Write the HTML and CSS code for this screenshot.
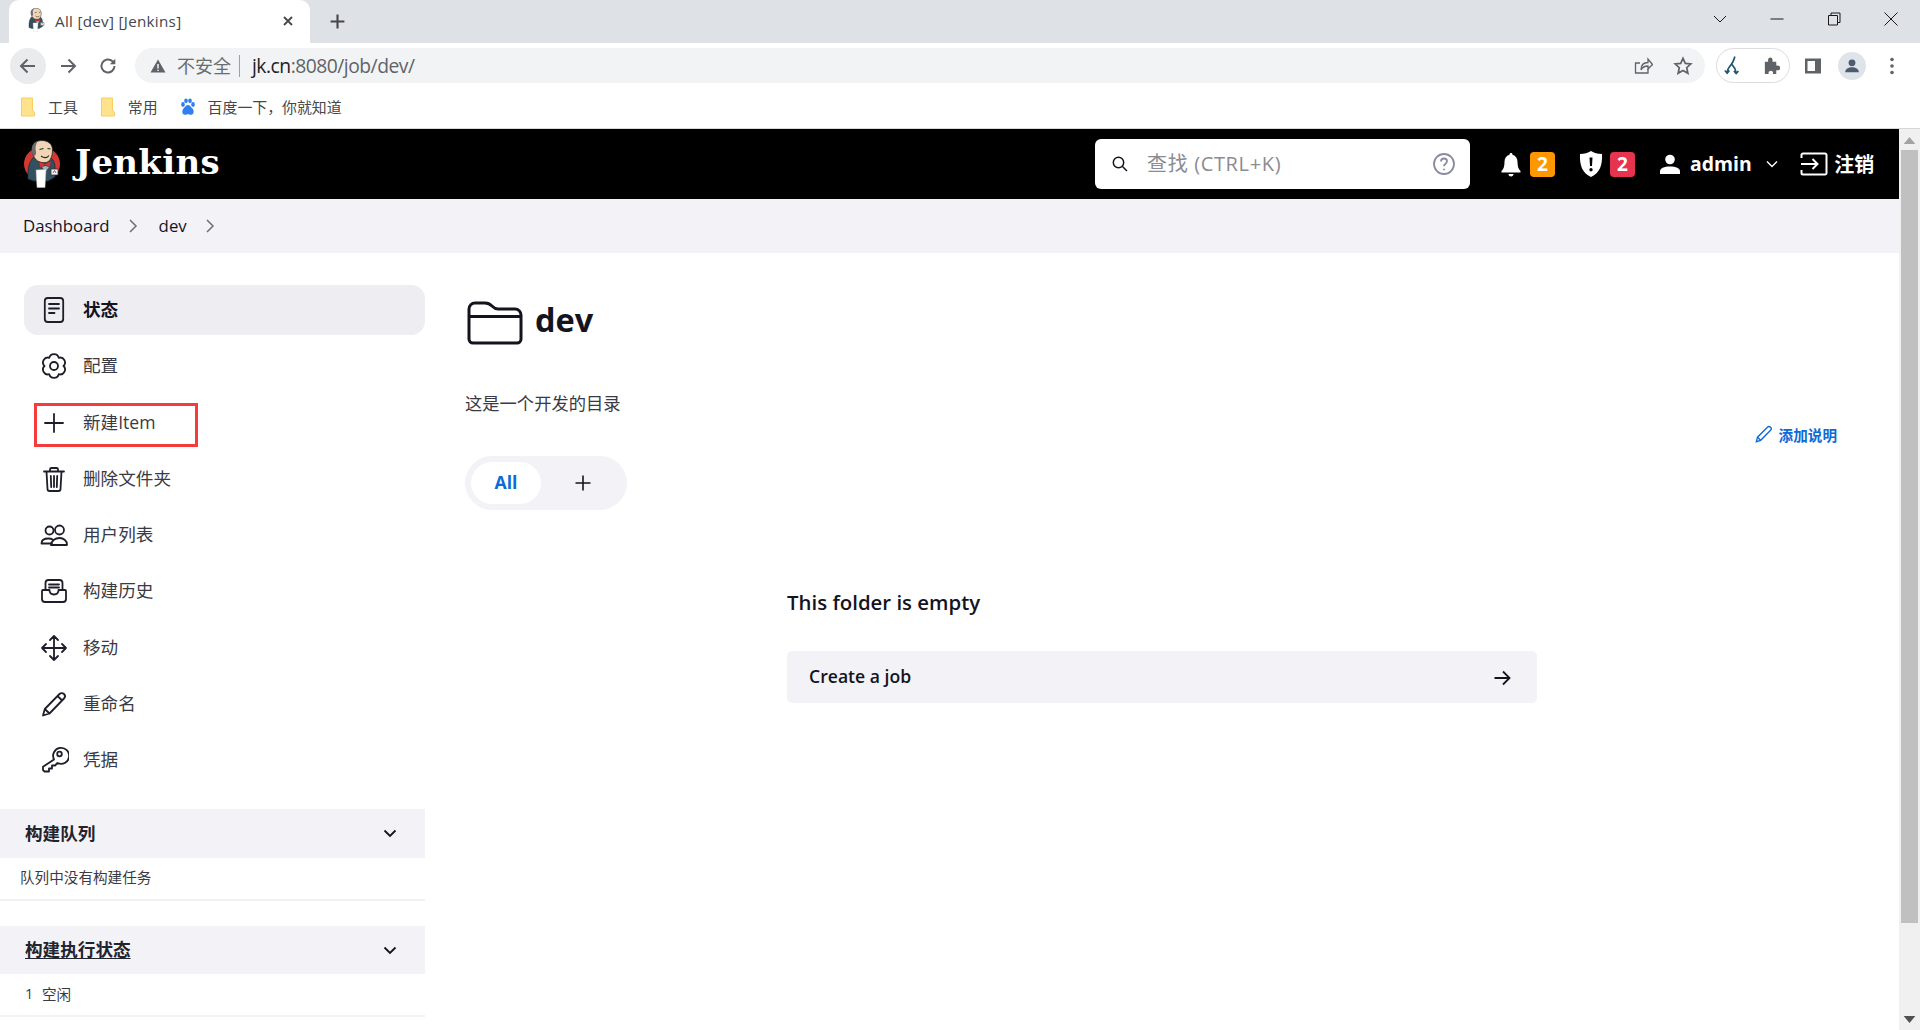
FILE: index.html
```html
<!DOCTYPE html>
<html lang="zh-CN">
<head>
<meta charset="utf-8">
<title>All [dev] [Jenkins]</title>
<link rel="stylesheet" href="styles.css">
</head>
<body>
<svg class="sprite" aria-hidden="true">
  <symbol id="butler" viewBox="0 0 36 48">
    <path d="M4 33c0-9 4-16 9-18l9 1c6 1 9 5 9 12v9l-7 4H10l-6-2z" fill="#335061" stroke="#1c2b35" stroke-width=".8"/>
    <path d="M8 9C8 3 13 .5 18 .5c6 0 10.500 3.500 10.500 9.500 0 5-1 8.500-4 11.500-2 1.500-6 1.500-9 .5-4-1.500-7-6-7.500-12.500z" fill="#f0d6b7" stroke="#2b2b2b" stroke-width=".9"/>
    <path d="M8.500 14C6.500 8 9 2.500 14 1 11.500 4 11 8 12 12c.5 3-2 6-3.500 2z" fill="#6d6b6d"/>
    <path d="M15.500 9.500l4-1M23.500 8.500l3 .5M17 16c3 2.500 6.500 2 8-.5" fill="none" stroke="#2b2b2b" stroke-width="1.100"/>
    <path d="M15 21.500l6 2.500 6-3-1 6-5-2-5 3z" fill="#d33833" stroke="#7a1f1c" stroke-width=".4"/>
    <path d="M18 27l3.500-1 3.500 1-3.500 4.500z" fill="#a8b4ba"/>
    <path d="M12 30l10-.5-1 18h-8z" fill="#fff" stroke="#bbb" stroke-width=".5"/>
    <path d="M27 29l7 0v6h-7z" fill="#f4f4f4" stroke="#333" stroke-width=".8"/>
    <path d="M29 33l1.500-2.500 1.500 2.500" fill="none" stroke="#333" stroke-width=".7"/>
  </symbol>
</svg>

<header class="tabstrip">
  <div class="tab">
    <svg class="favicon"><use href="#butler"/></svg>
    <span class="tab-title">All [dev] [Jenkins]</span>
    <svg class="tab-close" viewBox="0 0 12 12"><path d="M2 2l8 8M10 2l-8 8"/></svg>
  </div>
  <svg class="tab-new" viewBox="0 0 16 16"><path d="M8 1.500v13M1.500 8h13"/></svg>
  <div class="window-controls">
    <svg viewBox="0 0 16 16"><path d="M2 5l6 6 6-6"/></svg>
    <svg viewBox="0 0 16 16"><path d="M1.500 8h13"/></svg>
    <svg viewBox="0 0 16 16"><path d="M2.500 4.500h9v9.500h-9zM5 4.500V2h9v9.500h-2.500"/></svg>
    <svg viewBox="0 0 16 16"><path d="M1.500 1.500l13 13M14.500 1.500l-13 13"/></svg>
  </div>
</header>

<nav class="toolbar">
  <span class="tool tool-back"><svg viewBox="0 0 20 20"><path d="M17 10H3.500M9.500 3.500L3 10l6.500 6.500"/></svg></span>
  <span class="tool"><svg viewBox="0 0 20 20"><path d="M3 10h13.500M10.500 3.500L17 10l-6.500 6.500"/></svg></span>
  <span class="tool"><svg viewBox="0 0 20 20"><path d="M16.500 10a6.500 6.500 0 1 1-2-4.700L16.500 7.500"/><path class="solid" d="M17.300 2.800v5.500h-5.500z"/></svg></span>
  <div class="omnibox">
    <svg class="warn" viewBox="0 0 16 16"><path d="M8 1.500L15.500 14.500H.5z"/><path class="warn-mark" d="M8 6v4.500M8 11.800v1.200"/></svg>
    <span class="insecure">不安全</span>
    <span class="omni-sep"></span>
    <span class="url"><b>jk.cn</b>:8080/job/dev/</span>
    <svg class="omni-icon" viewBox="0 0 20 20"><path d="M15 13v4H2.500V7H7"/><path d="M8 14c0-5 3-7.500 7-7.500V3l4.500 5.500L15 13V10c-3 0-5.500 1-7 4z"/></svg>
    <svg class="omni-icon star" viewBox="0 0 20 20"><path d="M10 2.300l2.300 5.100 5.500.6-4.100 3.700 1.200 5.500L10 14.400l-4.900 2.800 1.200-5.500L2.200 8l5.500-.6z"/></svg>
  </div>
  <div class="ext-pill">
    <svg class="ext-fork" viewBox="0 0 20 22"><path d="M12 1C11 7 8 10 5 14c-1 2-1.500 3-1.500 5M9 10c2 2 3.500 4 4.500 9M1 16.500l2.500 3 2.500-3M11 17l2.500 3 2.500-3"/></svg>
    <svg class="ext-puzzle" viewBox="0 0 20 20"><path d="M3 6h3.500C6 3 7 1.500 8.800 1.500S11.500 3 11 6h4v4c3-.5 4 .7 4 2.500S18 15.500 15 15v4h-3.500c.5-2.500-.7-3.500-2.200-3.500S6.500 16.500 7 19H3z"/></svg>
  </div>
  <svg class="side-panel" viewBox="0 0 18 18"><path d="M1 1.500h16v15H1zM3.500 4v10H11V4z" fill-rule="evenodd"/></svg>
  <span class="avatar"><svg viewBox="0 0 20 20"><circle cx="10" cy="6.500" r="3.800"/><path d="M2.500 17c0-3.800 3.500-5.500 7.500-5.500s7.500 1.700 7.500 5.500z"/></svg></span>
  <svg class="kebab" viewBox="0 0 6 20"><circle cx="3" cy="3.500" r="1.800"/><circle cx="3" cy="10" r="1.800"/><circle cx="3" cy="16.500" r="1.800"/></svg>
</nav>

<div class="bookmarks">
  <span class="bookmark"><svg class="bm-folder" viewBox="0 0 15 20"><path d="M1.500 1h11v12l2 2.500v3.500h-13z"/></svg>工具</span>
  <span class="bookmark"><svg class="bm-folder" viewBox="0 0 15 20"><path d="M1.500 1h11v12l2 2.500v3.500h-13z"/></svg>常用</span>
  <span class="bookmark"><svg class="bm-baidu" viewBox="0 0 16 18"><ellipse cx="3" cy="6.500" rx="1.800" ry="2.400"/><ellipse cx="6" cy="2.800" rx="1.800" ry="2.400"/><ellipse cx="10" cy="2.800" rx="1.800" ry="2.400"/><ellipse cx="13" cy="6.500" rx="1.800" ry="2.400"/><path d="M8 7c-2 0-3 2-4.500 3.500S1.500 16.800 5 16.800c1.500 0 2-.5 3-.5s1.500.5 3 .5c3.500 0 3-5 1.500-6.300S10 7 8 7z"/></svg>百度一下，你就知道</span>
</div>

<div class="viewport">
  <div class="page">
    <div class="jenkins-bar">
      <div class="brand">
        <svg class="logo" viewBox="0 0 36 48"><ellipse cx="18" cy="24" rx="18" ry="17" fill="#d33833"/><use href="#butler"/></svg>
        <span class="wordmark">Jenkins</span>
      </div>
      <div class="search">
        <svg class="search-glass" viewBox="0 0 18 18"><circle cx="7.500" cy="7.500" r="5.200"/><path d="M11.500 11.500L16 16"/></svg>
        <span class="search-text">查找 (CTRL+K)</span>
        <svg class="search-help" viewBox="0 0 24 24"><circle cx="12" cy="12" r="10"/><path d="M9 9.500C9 7.500 10.500 6.500 12 6.500S15 7.500 15 9.300c0 2.500-3 2.400-3 5"/><path d="M12 16.800v1.400"/></svg>
      </div>
      <div class="bar-actions">
        <span class="bar-item">
          <svg class="bar-icon" viewBox="0 0 24 26"><path d="M12 1.500c1 0 1.500.7 1.500 1.700 3.500 1 5 3.800 5 7.300 0 4.500 1 7 3 9v1.500H2.500V19.500c2-2 3-4.500 3-9 0-3.500 1.500-6.300 5-7.300 0-1 .5-1.700 1.500-1.700z"/><path d="M9.500 22.500h5c0 1.500-1 2.500-2.500 2.500s-2.500-1-2.500-2.500z"/></svg>
          <span class="badge badge-warn">2</span>
        </span>
        <span class="bar-item">
          <svg class="bar-icon shield" viewBox="0 0 24 28"><path fill-rule="evenodd" d="M12 1c3 2 6.500 3 11 3 .5 11-2 19-11 23C3 23 .5 15 1 4c4.500 0 8-1 11-3zM10.500 7.500l.5 8.500h2l.5-8.500zM12 18a1.700 1.700 0 1 0 0 3.400A1.700 1.700 0 0 0 12 18z"/></svg>
          <span class="badge badge-danger">2</span>
        </span>
        <span class="bar-user">
          <svg class="user-icon" viewBox="0 0 20 20"><circle cx="10" cy="5.500" r="4.800"/><path d="M0 20v-2.500c0-3.500 4-5 10-5s10 1.500 10 5V20z"/></svg>
          <span class="user-name">admin</span>
          <svg class="user-caret" viewBox="0 0 12 8"><path d="M1 1.500l5 5 5-5"/></svg>
        </span>
        <span class="bar-logout">
          <svg class="logout-icon" viewBox="0 0 28 24"><path d="M1.500 6V3a1.500 1.500 0 0 1 1.500-1.500h22A1.500 1.500 0 0 1 26.500 3v18a1.500 1.500 0 0 1-1.500 1.500H3A1.500 1.500 0 0 1 1.500 21v-3"/><path d="M1 12h16M12.500 7l5 5-5 5"/></svg>
          <span class="logout-text">注销</span>
        </span>
      </div>
    </div>

    <div class="breadcrumbs">
      <span>Dashboard</span>
      <svg viewBox="0 0 10 16"><path d="M2 2l6 6-6 6"/></svg>
      <span>dev</span>
      <svg viewBox="0 0 10 16"><path d="M2 2l6 6-6 6"/></svg>
    </div>

    <div class="layout">
      <aside class="sidebar">
        <ul class="tasks">
          <li class="task task-active">
            <svg viewBox="0 0 30 30"><rect x="5.800" y="3" width="18.400" height="24" rx="3"/><path d="M10 9h10M10 13.500h10M10 18h5.500"/></svg>
            <span>状态</span>
          </li>
          <li class="task">
            <svg viewBox="0 0 30 30"><path d="M24.500 15A4.900 4.900 0 0 1 19.750 23.230 4.900 4.900 0 0 1 10.250 23.230 4.900 4.900 0 0 1 5.500 15 4.900 4.900 0 0 1 10.250 6.770 4.900 4.900 0 0 1 19.750 6.770 4.900 4.900 0 0 1 24.500 15z"/><circle cx="15" cy="15" r="4"/></svg>
            <span>配置</span>
          </li>
          <li class="task task-marked">
            <svg viewBox="0 0 30 30"><path d="M15 6v18M6 15h18"/></svg>
            <span>新建Item</span>
          </li>
          <li class="task">
            <svg viewBox="0 0 30 30"><path d="M5 7.500h20M11 7.500V5.500a1.500 1.500 0 0 1 1.500-1.500h5A1.500 1.500 0 0 1 19 5.500v2M7.500 7.500l1 17.500a2 2 0 0 0 2 2h9a2 2 0 0 0 2-2l1-17.500M11.800 12l.4 11M15 12v11M18.200 12l-.4 11"/></svg>
            <span>删除文件夹</span>
          </li>
          <li class="task">
            <svg viewBox="0 0 30 30"><circle cx="10.500" cy="10.500" r="4"/><circle cx="20.500" cy="10" r="4.500"/><path d="M13 23.500h-10.500c0-2.500 2-5 7-5 1.500 0 3 .3 4 1M12 25h16c.5-4-3.500-7-7.500-7s-8 2.500-8.500 7z"/></svg>
            <span>用户列表</span>
          </li>
          <li class="task">
            <svg viewBox="0 0 30 30"><path d="M6.500 14V7a3 3 0 0 1 3-3h11a3 3 0 0 1 3 3v7M3 15a1 1 0 0 1 1-1h6.500c0 3 2 4.500 4.500 4.500s4.500-1.500 4.500-4.500H26a1 1 0 0 1 1 1v8a3 3 0 0 1-3 3H6a3 3 0 0 1-3-3zM10 8.500h10M10 11.500h10"/></svg>
            <span>构建历史</span>
          </li>
          <li class="task">
            <svg viewBox="0 0 30 30"><path d="M15 3v24M3 15h24M11 7l4-4 4 4M11 23l4 4 4-4M7 11l-4 4 4 4M23 11l4 4-4 4"/></svg>
            <span>移动</span>
          </li>
          <li class="task">
            <svg viewBox="0 0 30 30"><path d="M4 26.500l1.800-6.500L20.500 5a3 3 0 0 1 4.500 4.500L10.500 24.500zM5.800 20l4.700 4.500M18.500 7l4.700 4.500"/></svg>
            <span>重命名</span>
          </li>
          <li class="task">
            <svg viewBox="0 0 30 30"><path d="M15 14.500a8 8 0 1 1 3.500 3.500l-2.500 2.500h-3v3h-3v3H5.500l-1.500-1.500v-3.200z"/><circle cx="20.500" cy="9" r="2.300"/></svg>
            <span>凭据</span>
          </li>
        </ul>

        <section class="pane">
          <h2 class="pane-head"><span>构建队列</span><svg viewBox="0 0 14 9"><path d="M1.500 1.500L7 7l5.500-5.500"/></svg></h2>
          <div class="pane-body pane-body-queue">队列中没有构建任务</div>
        </section>
        <section class="pane">
          <h2 class="pane-head"><span class="pane-link">构建执行状态</span><svg viewBox="0 0 14 9"><path d="M1.500 1.500L7 7l5.500-5.500"/></svg></h2>
          <div class="pane-body"><span class="exec-num">1</span><span>空闲</span></div>
        </section>
      </aside>

      <main class="main">
        <div class="title-row">
          <svg class="title-folder" viewBox="0 0 56 44"><path d="M2 8a6 6 0 0 1 6-6h10c3 0 5 1 7 3s3 3 6 3h17a6 6 0 0 1 6 6v24a4 4 0 0 1-4 4H6a4 4 0 0 1-4-4zM2 15.500h52"/></svg>
          <h1>dev</h1>
        </div>
        <p class="description">这是一个开发的目录</p>
        <div class="add-row">
          <a class="add-desc">
            <svg viewBox="0 0 20 20"><path d="M1.500 18.500l1.300-5L13.800 2.500a2.400 2.400 0 0 1 3.500 3.400L6.300 17z"/><path d="M2.800 13.500l3.500 3.500"/></svg>
            添加说明
          </a>
        </div>
        <div class="view-tabs">
          <span class="view-tab-active">All</span>
          <svg class="view-add" viewBox="0 0 18 18"><path d="M9 1.500v15M1.500 9h15"/></svg>
        </div>
        <div class="empty">
          <h2>This folder is empty</h2>
          <div class="empty-card">
            <span class="empty-link">Create a job</span>
            <svg viewBox="0 0 20 20"><path d="M2.500 10h15M11 3.500l6.500 6.500-6.500 6.500"/></svg>
          </div>
        </div>
      </main>
    </div>
  </div>

  <div class="scrollbar">
    <svg class="scroll-arrow" viewBox="0 0 10 6"><path d="M5 0l5 6H0z"/></svg>
    <div class="scroll-thumb"></div>
    <svg class="scroll-arrow scroll-arrow-down" viewBox="0 0 10 6"><path d="M5 6L0 0h10z"/></svg>
  </div>
</div>
</body>
</html>
```

FILE: styles.css
```css
*, *::before, *::after { box-sizing: border-box; }
html, body {
  margin: 0;
  height: 1030px;
  overflow: hidden;
}
body {
  display: flex;
  flex-direction: column;
  background: #fff;
  color: #14141f;
  font-family: "Open Sans", "Noto Sans CJK SC", sans-serif;
  font-size: 17.6px;
}
svg { display: block; flex: none; }
.sprite { width: 0; height: 0; position: absolute; }

/* browser chrome */
.tabstrip {
  height: 43px;
  flex: none;
  background: #dee1e6;
  display: flex;
  align-items: flex-end;
  padding-left: 9px;
}
.tab {
  width: 301px;
  height: 43px;
  background: #fff;
  border-radius: 10px 10px 0 0;
  display: flex;
  align-items: center;
  padding-left: 17px;
}
.favicon { width: 20px; height: 24px; margin-bottom: 3px; }
.tab-title {
  margin-left: 9px;
  font-size: 15.200px;
  letter-spacing: .3px;
  color: #45474a;
  width: 227px;
  margin-top: -1px;
}
.tab-close { width: 12px; height: 12px; fill: none; stroke: #45474a; stroke-width: 1.800; margin-bottom: 2px; }
.tab-new { width: 17px; height: 17px; margin: 0 0 13px 19px; fill: none; stroke: #45474a; stroke-width: 2; }
.window-controls {
  margin-left: auto;
  height: 43px;
  display: flex;
  align-items: flex-start;
  padding: 11px 21px 0 0;
  gap: 41px;
}
.window-controls svg { width: 16px; height: 16px; fill: none; stroke: #1a1a1a; stroke-width: 1; }

.toolbar {
  height: 47px;
  flex: none;
  display: flex;
  align-items: center;
  padding: 0 0 2px 10px;
  background: #fff;
}
.tool {
  width: 36px;
  height: 36px;
  margin-right: 4px;
  display: flex;
  align-items: center;
  justify-content: center;
  border-radius: 50%;
}
.tool-back { background: #e9ebed; }
.tool svg { width: 20px; height: 20px; fill: none; stroke: #5f6368; stroke-width: 2; }
.tool svg .solid { fill: #5f6368; stroke: none; }
.omnibox {
  width: 1570px;
  margin-left: 5px;
  height: 35px;
  background: #f1f3f4;
  border-radius: 18px;
  display: flex;
  align-items: center;
  padding-left: 15px;
}
.warn { width: 16px; height: 16px; fill: #5f6368; }
.warn-mark { stroke: #f1f3f4; stroke-width: 1.500; fill: none; }
.insecure { margin: -2px 0 0 11px; font-size: 18px; color: #6a6d70; }
.omni-sep { width: 1px; height: 22px; background: #9aa0a6; margin: 0 12px 0 8px; }
.url {
  font-size: 19.300px;
  color: #5f6368;
  letter-spacing: -0.5px;
}
.url b { font-weight: 400; color: #202124; }
.omni-icon { width: 20px; height: 20px; fill: none; stroke: #5f6368; stroke-width: 1.300; margin-left: auto; margin-right: 0; }
.omni-icon.star { margin-left: 20px; margin-right: 12px; stroke-width: 1.700; }
.ext-pill {
  width: 74px;
  height: 35px;
  margin-left: 11px;
  border: 1px solid #dadce0;
  border-radius: 18px;
  display: flex;
  align-items: center;
  padding-left: 7px;
  gap: 20px;
}
.ext-fork { width: 18px; height: 21px; fill: none; stroke: #1f5572; stroke-width: 1.800; }
.ext-puzzle { width: 19px; height: 19px; fill: #5f6368; }
.side-panel { width: 18px; height: 18px; margin-left: 14px; fill: #5f6368; }
.avatar {
  width: 28px;
  height: 28px;
  margin-left: 16px;
  background: #dfe3ea;
  border-radius: 50%;
  display: flex;
  align-items: center;
  justify-content: center;
}
.avatar svg { width: 18px; height: 18px; fill: #4d5b70; }
.kebab { width: 6px; height: 20px; margin-left: 23px; fill: #5f6368; }

.bookmarks {
  height: 39px;
  flex: none;
  background: #fff;
  border-bottom: 1px solid #d5d7da;
  display: flex;
  align-items: center;
  padding: 0 0 5px 20px;
  font-size: 14.900px;
  color: #45474a;
}
.bookmark { display: flex; align-items: center; margin-right: 22px; }
.bm-folder { width: 15px; height: 20px; margin-right: 13px; fill: #ffe28a; stroke: #f6cf60; stroke-width: 1; }
.bm-baidu { width: 16px; height: 18px; margin-right: 12px; fill: #2f7ff0; }

/* page */
.viewport { flex: 1; display: flex; min-height: 0; }
.page { flex: 1; min-width: 0; display: flex; flex-direction: column; }

.jenkins-bar {
  height: 70px;
  flex: none;
  background: #000;
  color: #fff;
  display: flex;
  align-items: center;
  padding-left: 24px;
}
.brand { display: flex; align-items: center; width: 1071px; }
.logo { width: 36px; height: 48px; }
.wordmark {
  margin-left: 15px;
  font-family: "DejaVu Serif", serif;
  font-weight: 700;
  font-size: 34px;
  letter-spacing: .3px;
  line-height: 1;
  margin-top: -5px;
}
.search {
  width: 375px;
  height: 50px;
  background: #fff;
  border-radius: 6px;
  display: flex;
  align-items: center;
  padding: 0 14px 0 16px;
}
.search-glass { width: 18px; height: 18px; fill: none; stroke: #14141f; stroke-width: 1.500; }
.search-text { margin: -2px 0 2px 18px; color: #8b8b93; font-size: 20px; letter-spacing: .65px; }
.search-help { width: 24px; height: 24px; margin-left: auto; fill: none; stroke: #8a8aa0; stroke-width: 1.800; }
.bar-actions { display: flex; align-items: center; margin-left: 29px; font-weight: 700; }
.bar-item { display: flex; align-items: center; gap: 7px; margin-right: 24px; }
.bar-icon { width: 24px; height: 27px; fill: #fff; }
.shield { width: 24px; height: 28px; }
.badge {
  width: 25px;
  height: 25px;
  border-radius: 4px;
  display: flex;
  align-items: center;
  justify-content: center;
  font-size: 19px;
  font-weight: 700;
  line-height: 1;
}
.badge-warn { background: #ff9800; }
.badge-danger { background: #e6334e; }
.bar-user { display: flex; align-items: center; margin-left: 1px; }
.user-icon { width: 20px; height: 20px; fill: #fff; }
.user-name { margin: -2px 0 0 10px; font-size: 19.400px; font-weight: 700; }
.user-caret { width: 12px; height: 8px; margin-left: 14px; fill: none; stroke: #fff; stroke-width: 1.400; }
.bar-logout { display: flex; align-items: center; margin-left: 22.500px; font-size: 20px; }
.logout-icon { width: 28px; height: 24px; fill: none; stroke: #fff; stroke-width: 2; margin-right: 6px; }
.logout-text { margin: -1px 0 1px; }

.breadcrumbs {
  height: 54px;
  flex: none;
  background: #f2f2f7;
  display: flex;
  align-items: center;
  padding: 0 0 1px 23px;
  font-size: 16.800px;
  color: #14141f;
}
.breadcrumbs svg { width: 10px; height: 16px; margin: 0 21px 0 18px; fill: none; stroke: #6e6e78; stroke-width: 1.500; }

.layout { flex: 1; display: flex; min-height: 0; }
.sidebar { width: 425px; flex: none; padding-top: 32px; }
.tasks { list-style: none; margin: 0 0 24px 24px; padding: 0; display: flex; flex-direction: column; gap: 6.300px; }
.task {
  height: 50px;
  border-radius: 14px;
  display: flex;
  align-items: center;
  padding-left: 15px;
  gap: 14px;
  color: #3a3a45;
  position: relative;
}
.task span { margin-top: -3px; }
.task svg { width: 30px; height: 30px; fill: none; stroke: #1e1e2a; stroke-width: 1.800; stroke-linejoin: round; stroke-linecap: round; }
.task-active { background: #ededf2; font-weight: 700; color: #14141f; }
.task-marked::after {
  content: "";
  position: absolute;
  left: 10px;
  top: 5px;
  width: 164px;
  height: 44px;
  border: 3px solid #f63b3b;
}
.pane { margin-bottom: 25px; }
.pane-head {
  margin: 0;
  height: 48.500px;
  background: #f2f2f7;
  display: flex;
  align-items: center;
  justify-content: space-between;
  padding: 0 28px 0 25px;
  font-size: 17.600px;
  font-weight: 700;
  color: #23232e;
}
.pane-head span { margin-top: -3px; }
.pane-head svg { width: 14px; height: 9px; fill: none; stroke: #14141f; stroke-width: 1.800; }
.pane-link { text-decoration: underline; text-underline-offset: 2px; }
.pane-body {
  height: 43px;
  border-bottom: 2px solid #f2f2f5;
  display: flex;
  align-items: center;
  padding-left: 25px;
  padding-bottom: 3px;
  font-size: 14.600px;
  color: #3a3a45;
}
.pane-body-queue { padding-left: 20px; }
.exec-num { width: 17px; }

.main { flex: 1; min-width: 0; padding: 48px 40px 0; }
.title-row { display: flex; align-items: center; height: 44px; }
.title-folder { width: 56px; height: 44px; margin-left: 2px; fill: none; stroke: #14141f; stroke-width: 3; stroke-linejoin: round; }
.title-row h1 { margin: -6px 0 0 12px; font-size: 32.500px; font-weight: 700; line-height: 1; color: #14141f; }
.description { margin: 44px 0 0; height: 30px; line-height: 30px; color: #3a3a45; font-size: 17.300px; }
.add-row { display: flex; justify-content: flex-end; align-items: center; height: 30px; padding-right: 22px; }
.add-desc { display: flex; align-items: center; gap: 6px; font-size: 14.600px; color: #0b6bd8; font-weight: 600; }
.add-desc svg { width: 18px; height: 18px; fill: none; stroke: #0b6bd8; stroke-width: 1.500; }
.view-tabs {
  width: 162px;
  height: 54px;
  margin-top: 7px;
  padding: 6px;
  background: #f2f2f7;
  border-radius: 27px;
  display: flex;
  align-items: center;
}
.view-tab-active {
  width: 70px;
  height: 42px;
  padding-bottom: 3px;
  background: #fff;
  border-radius: 21px;
  color: #0b6bd8;
  font-weight: 700;
  display: flex;
  align-items: center;
  justify-content: center;
}
.view-add { width: 18px; height: 18px; margin-left: 33px; fill: none; stroke: #14141f; stroke-width: 1.600; }
.empty { width: 750px; margin: 77px auto 0; }
.empty h2 { margin: 0; font-size: 20.400px; font-weight: 600; line-height: 30px; color: #14141f; }
.empty-card {
  margin-top: 34px;
  height: 52px;
  background: #f2f2f7;
  border-radius: 5px;
  display: flex;
  align-items: center;
  justify-content: space-between;
  padding: 0 25px 0 22px;
  font-weight: 600;
  font-size: 17.600px;
}
.empty-link { margin-top: -2px; }
.empty-card svg { width: 20px; height: 20px; margin-top: 2px; fill: none; stroke: #14141f; stroke-width: 1.800; }

.scrollbar {
  width: 21px;
  flex: none;
  background: #f0f0f0;
  display: flex;
  flex-direction: column;
  align-items: center;
}
.scroll-arrow { width: 13px; height: 7px; fill: #a3a3a3; margin: 8px 0 6px; }
.scroll-arrow-down { margin: auto 0 7px; fill: #505050; }
.scroll-thumb { width: 17px; height: 773px; background: #c0c0c0; }
```
